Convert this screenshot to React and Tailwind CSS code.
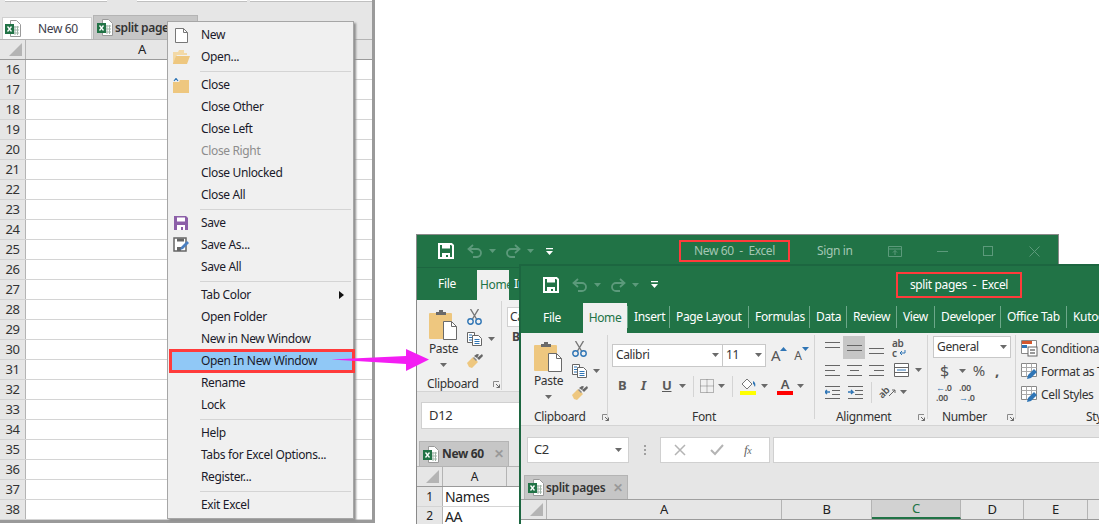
import React from 'react';

const rowNums = Array.from({ length: 23 }, (_, i) => 16 + i);

const menu = [
  { label: 'New', icon: 'new' },
  { label: 'Open...', icon: 'open' },
  { sep: true },
  { label: 'Close', icon: 'close' },
  { label: 'Close Other' },
  { label: 'Close Left' },
  { label: 'Close Right', disabled: true },
  { label: 'Close Unlocked' },
  { label: 'Close All' },
  { sep: true },
  { label: 'Save', icon: 'save' },
  { label: 'Save As...', icon: 'saveas' },
  { label: 'Save All' },
  { sep: true },
  { label: 'Tab Color', sub: true },
  { label: 'Open Folder' },
  { label: 'New in New Window' },
  { label: 'Open In New Window', active: true },
  { label: 'Rename' },
  { label: 'Lock' },
  { sep: true },
  { label: 'Help' },
  { label: 'Tabs for Excel Options...' },
  { label: 'Register...' },
  { sep: true },
  { label: 'Exit Excel' },
];

const ribbonTabs = [
  { label: 'Insert', w: 'w-[42px]' },
  { label: 'Page Layout', w: 'w-[79px]' },
  { label: 'Formulas', w: 'w-[61px]' },
  { label: 'Data', w: 'w-[37px]' },
  { label: 'Review', w: 'w-[50px]' },
  { label: 'View', w: 'w-[38px]' },
  { label: 'Developer', w: 'w-[66px]' },
  { label: 'Office Tab', w: 'w-[66px]' },
  { label: 'Kutools', w: 'w-[60px]' },
];

function XlsIcon() {
  return (
    <svg width="16" height="17" viewBox="0 0 16 17" className="shrink-0">
      <path d="M5.5 .5h6l4 4v12h-10z" fill="#fff" stroke="#9a9a9a" />
      <path d="M8 7h6M8 10h6M8 13h6M10 6v9M12.5 6v9" stroke="#9fb5a8" fill="none" />
      <rect x="0" y="4" width="9" height="10" fill="#217346" />
      <path d="M2.5 6.5l4 5M6.5 6.5l-4 5" stroke="#fff" strokeWidth="1.3" />
    </svg>
  );
}

function Caret({ color = '#6a6a6a' }) {
  return (
    <svg width="7" height="4" viewBox="0 0 7 4" className="shrink-0">
      <path d="M0 0h7L3.5 4z" fill={color} />
    </svg>
  );
}

function Launcher() {
  return (
    <svg width="7" height="7" viewBox="0 0 7 7" className="shrink-0">
      <path d="M.5 6V.5H6" stroke="#8a8a8a" fill="none" />
      <path d="M3 3l3.5 3.5M6.5 3.5v3h-3" stroke="#6a6a6a" fill="none" />
    </svg>
  );
}

function Corner() {
  return (
    <svg width="13" height="13" viewBox="0 0 13 13">
      <path d="M13 0v13H0z" fill="#b4b4b4" />
    </svg>
  );
}

function SaveIcon({ color = '#fff', size = 16 }) {
  return (
    <svg width={size} height={size} viewBox="0 0 16 16">
      <path d="M1 1h12.5L15 2.5V15H1z" fill="none" stroke={color} strokeWidth="2" />
      <path d="M4 1.5h8v4H4zM4 10h8v5h-2v-3H8v3H4z" fill={color} />
    </svg>
  );
}

function Undo({ flip }) {
  return (
    <svg width="16" height="14" viewBox="0 0 16 14" className={flip ? '-scale-x-100' : ''}>
      <path d="M6 1L1.5 5 6 9M2 5h8a4 4 0 0 1 0 8H6" fill="none" stroke="#5c9a7b" strokeWidth="1.8" />
    </svg>
  );
}

function QatDown() {
  return (
    <svg width="7" height="7" viewBox="0 0 7 7">
      <path d="M0 0h7v1.2H0zM0 3h7L3.5 7z" fill="#fff" />
    </svg>
  );
}

function PasteIcon() {
  return (
    <svg width="29" height="31" viewBox="0 0 29 31" className="shrink-0">
      <rect x="0" y="4" width="23" height="26" rx="1" fill="#eec77f" />
      <path d="M7 6V3h3V1h4v2h3v3z" fill="#6a6a6a" />
      <path d="M14.5 12.5h8l5 5v13h-13z" fill="#fff" stroke="#6a6a6a" />
      <path d="M22.5 12.5v5h5" fill="none" stroke="#6a6a6a" />
    </svg>
  );
}

function CutIcon() {
  return (
    <svg width="15" height="16" viewBox="0 0 15 16" className="shrink-0">
      <path d="M3.5 0l6 10M11.5 0l-6 10" stroke="#777" strokeWidth="1.4" fill="none" />
      <circle cx="3.5" cy="12.5" r="2.7" fill="none" stroke="#2f75b5" strokeWidth="1.4" />
      <circle cx="11.5" cy="12.5" r="2.7" fill="none" stroke="#2f75b5" strokeWidth="1.4" />
    </svg>
  );
}

function CopyIcon() {
  return (
    <svg width="15" height="14" viewBox="0 0 15 14" className="shrink-0">
      <path d="M.5.5h7v10h-7z" fill="#fff" stroke="#666" />
      <path d="M5.5 3.5h6l3 3v7h-9z" fill="#fff" stroke="#666" />
      <path d="M2 3h3M2 5.5h3M2 8h3M7.5 7.5h5M7.5 9.5h5M7.5 11.5h5" stroke="#2f75b5" />
    </svg>
  );
}

function BrushIcon() {
  return (
    <svg width="16" height="15" viewBox="0 0 16 15" className="shrink-0">
      <path d="M0 10l6-6 5 5-6 6-3-1z" fill="#eec77f" />
      <path d="M7 3l3-2 2 .5L10 5z M10 5l5-4 1 2-4 4z" fill="#666" />
      <path d="M9 8l-3-3 1-1 3 3z" fill="#8a8a8a" />
    </svg>
  );
}

function Lines({ rows, hl }) {
  // horizontal strokes for the alignment buttons
  return (
    <svg width="15" height="14" viewBox="0 0 15 14" className="shrink-0">
      {rows.map((r, i) => (
        <path key={i} d={`M${r[0]} ${r[1]}.5H${r[2]}`} stroke="#666" />
      ))}
      {hl}
    </svg>
  );
}

function FileMenuIcon({ name }) {
  if (name === 'new') {
    return (
      <svg width="13" height="15" viewBox="0 0 13 15">
        <path d="M.5.5h8l4 4v10H.5z" fill="#fff" stroke="#777" />
        <path d="M8.5.5v4h4" fill="none" stroke="#777" />
      </svg>
    );
  }
  if (name === 'open') {
    return (
      <svg width="17" height="14" viewBox="0 0 17 14">
        <path d="M0 2h5l1-2h5v3h3v2H4L0 13z" fill="#f3d9a6" />
        <path d="M0 13l3-7h14l-3 8H0z" fill="#eec77f" />
      </svg>
    );
  }
  if (name === 'close') {
    return (
      <svg width="16" height="15" viewBox="0 0 16 15">
        <path d="M0 4h6l1-2h9v13H0z" fill="#eec77f" />
        <path d="M1 3l2-2.500 2 2.500" fill="none" stroke="#2f75b5" strokeWidth="1.200" />
      </svg>
    );
  }
  if (name === 'save') {
    return (
      <svg width="14" height="14" viewBox="0 0 14 14">
        <path d="M0 0h12l2 2v12H0z" fill="#8c5fa8" />
        <path d="M3 1.500h8v4H3zM3 9h8v5H9v-3H7v3H3z" fill="#fff" />
      </svg>
    );
  }
  return (
    <svg width="16" height="16" viewBox="0 0 16 16">
      <path d="M1 1h12v13H1z" fill="#fff" stroke="#666" strokeWidth="1.500" />
      <path d="M4 1.500h7v3H4zM4 10h4v4H4z" fill="#666" />
      <path d="M7 13l1-3 6-6 2 2-6 6z" fill="#4a7fc1" />
    </svg>
  );
}

function ContextMenu() {
  return (
    <div className="absolute left-[167px] top-[21px] w-[187px] h-[498px] bg-[#f0f0f0] border border-[#a6a6a6] shadow-[2px_2px_2px_#8f8f8f] pt-[2px] text-[12px] text-[#1a1a2a]">
      {menu.map((m, i) => {
        if (m.sep) {
          return (
            <div key={i} className="h-[6px] flex items-center pl-[32px] pr-[2px]">
              <div className="h-px w-full bg-[#d4d4d4]" />
            </div>
          );
        }
        return (
          <div
            key={i}
            className={`h-[22px] flex items-center ${
              m.active ? 'bg-[#90c8f6] outline-[3px] outline-[#ff3b3b] -outline-offset-2 ml-[2px] mr-[-1px]' : ''
            }`}
          >
            <div className={`${m.active ? 'w-[31px]' : 'w-[33px] pr-[7px]'} flex justify-center shrink-0`}>
              {m.icon && <FileMenuIcon name={m.icon} />}
            </div>
            <span className={m.disabled ? 'text-[#8d8d8d]' : ''}>{m.label}</span>
            {m.sub && (
              <svg width="5" height="8" viewBox="0 0 5 8" className="ml-auto mr-[9px]">
                <path d="M0 0l5 4-5 4z" fill="#111" />
              </svg>
            )}
          </div>
        );
      })}
    </div>
  );
}

function LeftWindow() {
  return (
    <div className="absolute left-0 top-0 w-[375px] h-[523px] border-r-[3px] border-b-[3px] border-[#9a9a9a] bg-[#e6e6e6] flex flex-col text-[12px] text-[#333]">
      <div className="h-[15px] flex items-start shrink-0">
        <div className="ml-[5px] w-[102px] h-[2px] bg-white border-b border-[#c0c0c0]" />
        <div className="ml-[30px] w-[110px] h-[2px] bg-white border-b border-[#c0c0c0]" />
        <div className="ml-[3px] w-[122px] h-[2px] bg-white border-b border-[#c0c0c0]" />
      </div>
      <div className="h-[25px] flex items-end pl-[2px] shrink-0 border-b border-[#b4b4b4]">
        <div className="w-[90px] h-[22px] bg-white flex items-center pl-[2px] border border-b-0 border-[#d0d0d0]">
          <XlsIcon />
          <span className="ml-[17px] text-[#3c3c4a]">New 60</span>
        </div>
        <div className="ml-px w-[105px] h-[24px] bg-[#c6c6c6] flex items-center pl-[3px] font-semibold border border-b-0 border-[#b4b4b4]">
          <XlsIcon />
          <span className="ml-[2px] whitespace-nowrap text-[#333]">split pages</span>
        </div>
      </div>
      <div className="h-[20px] flex shrink-0 border-b border-[#9a9a9a]">
        <div className="w-[26px] flex items-end justify-end pr-[3px] pb-[3px] border-r border-[#b4b4b4]">
          <Corner />
        </div>
        <div className="w-[232px] flex items-center justify-center text-[13px] text-[#222]">A</div>
      </div>
      {rowNums.map((n) => (
        <div key={n} className="h-[20px] flex shrink-0 border-b border-[#d4d4d4]">
          <div className="w-[26px] bg-[#e6e6e6] flex items-center justify-center text-[13px] border-r border-[#b4b4b4]">
            {n}
          </div>
          <div className="flex-1 bg-white" />
        </div>
      ))}
    </div>
  );
}

function BackWindow() {
  return (
    <div className="absolute left-[416px] top-[234px] w-[643px] h-[290px] border-t border-l border-r border-[#8a8a8a] bg-[#e6e6e6] flex flex-col text-[12px]">
      <div className="h-[33px] bg-[#217346] shrink-0 flex items-center text-[#a3c6b3] border-b border-[#1c6640]">
        <div className="ml-[21px]"><SaveIcon /></div>
        <div className="ml-[13px]"><Undo /></div>
        <div className="ml-[6px]"><Caret color="#5c9a7b" /></div>
        <div className="ml-[9px]"><Undo flip /></div>
        <div className="ml-[6px]"><Caret color="#5c9a7b" /></div>
        <div className="ml-[12px]"><QatDown /></div>
        <div className="ml-[126px] w-[111px] h-[22px] border-2 border-[#ff3b3b] flex items-center justify-center whitespace-pre">
          New 60  -  Excel
        </div>
        <span className="ml-[27px] w-[36px] whitespace-nowrap">Sign in</span>
        <svg width="14" height="11" viewBox="0 0 14 11" className="ml-[35px]">
          <path d="M.5.5h13v10H.5zM.5 3h13M7 9V4.500M5 6.500l2-2 2 2" fill="none" stroke="#5c9a7b" />
        </svg>
        <div className="ml-[35px] w-[11px] h-px bg-[#5c9a7b]" />
        <div className="ml-[35px] w-[10px] h-[10px] border border-[#5c9a7b]" />
        <svg width="11" height="11" viewBox="0 0 11 11" className="ml-[36px]">
          <path d="M.5.5l10 10M10.500.5l-10 10" stroke="#5c9a7b" fill="none" />
        </svg>
      </div>
      <div className="h-[32px] bg-[#217346] shrink-0 flex text-white">
        <div className="w-[60px] flex items-center justify-center">File</div>
        <div className="w-[32px] h-[30px] mt-[2px] bg-[#f0f0f0] text-[#217346] flex items-center pl-[3px] overflow-hidden">
          Home
        </div>
        <div className="flex items-center ml-[5px]">Insert</div>
      </div>
      <div className="h-[92px] bg-[#f0f0f0] shrink-0 border-b border-[#d4d4d4] flex text-[#444]">
        <div className="w-[85px] flex flex-col pl-[12px] pt-[8px] border-r border-[#d4d4d4] my-[1px]">
          <div className="flex h-[67px] shrink-0">
            <div className="flex flex-col items-center w-[29px]">
              <PasteIcon />
              <span className="mt-[1px] text-[#333] leading-[16px]">Paste</span>
              <div className="mt-[6px]"><Caret /></div>
            </div>
            <div className="ml-[9px] flex flex-col gap-[7px]">
              <CutIcon />
              <div className="flex items-center gap-[6px]"><CopyIcon /><Caret /></div>
              <BrushIcon />
            </div>
          </div>
          <div className="flex items-center text-[#333] leading-[16px] shrink-0">
            <span className="ml-[-2px]">Clipboard</span>
            <div className="ml-[15px]"><Launcher /></div>
          </div>
        </div>
        <div className="ml-[5px] pt-[7px]">
          <div className="w-[20px] h-[20px] bg-white border border-[#d0d0d0] pl-[2px] text-[#333] overflow-hidden">Ca</div>
          <div className="mt-[1px] pl-[5px] font-bold">B</div>
        </div>
      </div>
      <div className="h-[48px] shrink-0 pt-[10px] pl-[4px]">
        <div className="w-[100px] h-[27px] bg-white border border-[#d0d0d0] flex items-center pl-[7px] text-[#333] text-[13px]">D12</div>
      </div>
      <div className="h-[27px] shrink-0 flex items-end pl-[2px] border-b border-[#b4b4b4]">
        <div className="w-[90px] h-[25px] bg-[#c6c6c6] flex items-center pl-[3px] font-bold text-[#333] border border-b-0 border-[#b4b4b4]">
          <XlsIcon />
          <span className="ml-[3px]">New 60</span>
          <span className="ml-auto mr-[4px] text-[#999] font-bold">✕</span>
        </div>
      </div>
      <div className="h-[20px] shrink-0 flex border-b border-[#9a9a9a] text-[#222]">
        <div className="w-[26px] flex items-end justify-end pr-[3px] pb-[3px] border-r border-[#b4b4b4]"><Corner /></div>
        <div className="w-[64px] flex items-center justify-center border-r border-[#b4b4b4]">A</div>
      </div>
      <div className="h-[20px] shrink-0 flex border-b border-[#d4d4d4] text-[#222]">
        <div className="w-[26px] flex items-center justify-center border-r border-[#b4b4b4]">1</div>
        <div className="flex-1 bg-white pl-[2px] text-[14px] leading-[19px]">Names</div>
      </div>
      <div className="flex-1 flex text-[#222]">
        <div className="w-[26px] flex justify-center border-r border-[#b4b4b4]">2</div>
        <div className="flex-1 bg-white pl-[2px] text-[14px] leading-[20px]">AA</div>
      </div>
    </div>
  );
}

function ClipboardGroup() {
  return (
    <div className="w-[86px] shrink-0 flex flex-col pl-[13px] pt-[8px]">
      <div className="flex h-[68px] shrink-0">
        <div className="flex flex-col items-center w-[29px]">
          <PasteIcon />
          <span className="mt-[1px] text-[#333] leading-[16px]">Paste</span>
          <div className="mt-[6px]"><Caret /></div>
        </div>
        <div className="ml-[9px] flex flex-col gap-[7px]">
          <CutIcon />
          <div className="flex items-center gap-[6px]"><CopyIcon /><Caret /></div>
          <BrushIcon />
        </div>
      </div>
      <div className="flex items-center text-[#333] leading-[16px] shrink-0">
        <span>Clipboard</span>
        <div className="ml-[17px]"><Launcher /></div>
      </div>
    </div>
  );
}

function Divider() {
  return <div className="w-px h-[84px] bg-[#d4d4d4] mt-[2px] shrink-0" />;
}

function FontGroup() {
  return (
    <div className="w-[206px] shrink-0 flex flex-col pl-[4px] pt-[10px] text-[#333]">
      <div className="flex items-center h-[24px] shrink-0">
        <div className="w-[111px] h-[23px] bg-white border border-[#c8c8c8] flex items-center justify-between px-[3px]">
          Calibri<Caret />
        </div>
        <div className="w-[43px] h-[23px] bg-white border border-[#c8c8c8] border-l-0 flex items-center justify-between pl-[3px] pr-[3px]">
          11<Caret />
        </div>
        <span className="ml-[5px] text-[15px] text-[#555]">A</span>
        <svg width="7" height="4" viewBox="0 0 7 4" className="mb-[12px]"><path d="M0 4h7L3.500 0z" fill="#2f75b5" /></svg>
        <span className="ml-[7px] text-[12px] text-[#555] mt-[2px]">A</span>
        <svg width="7" height="4" viewBox="0 0 7 4" className="mb-[12px]"><path d="M0 0h7L3.500 4z" fill="#2f75b5" /></svg>
      </div>
      <div className="flex items-center h-[24px] mt-[7px] shrink-0 text-[#5a5a5a]">
        <span className="ml-[6px] w-[22px] font-bold text-[13px]">B</span>
        <span className="w-[22px] italic font-bold text-[13px] pl-[1px]">I</span>
        <span className="w-[14px] underline font-bold text-[13px]">U</span>
        <div className="ml-[3px]"><Caret /></div>
        <div className="ml-[7px] w-px h-[21px] bg-[#d4d4d4]" />
        <svg width="14" height="14" viewBox="0 0 14 14" className="ml-[6px]">
          <path d="M.5.500h13v13H.5z" fill="none" stroke="#777" strokeDasharray="1 1" />
          <path d="M7 .5v13M.5 7h13" stroke="#777" strokeDasharray="1 1" />
        </svg>
        <div className="ml-[4px]"><Caret /></div>
        <div className="ml-[7px] w-px h-[21px] bg-[#d4d4d4]" />
        <svg width="17" height="17" viewBox="0 0 17 17" className="ml-[7px]">
          <path d="M7 1l5 5-5 5-5-5z" fill="#fff" stroke="#777" />
          <path d="M13 3c2 1 3 3 2 6-1-1-1-3-2-3z" fill="#2f75b5" />
          <rect y="13" width="16" height="4" fill="#ffff00" />
        </svg>
        <div className="ml-[4px]"><Caret /></div>
        <div className="ml-[9px] w-[16px] flex flex-col items-center">
          <span className="text-[13px] leading-[13px] font-semibold text-[#555]">A</span>
          <div className="w-[16px] h-[4px] bg-[#ff0000]" />
        </div>
        <div className="ml-[4px]"><Caret /></div>
      </div>
      <div className="mt-[11px] text-center pr-[18px] leading-[16px] shrink-0">Font</div>
    </div>
  );
}

function AlignmentGroup() {
  const top = [[0, 1, 15], [0, 6, 15]];
  const mid = [[0, 4, 15], [0, 9, 15]];
  const bot = [[0, 7, 15], [0, 12, 15]];
  const left = [[0, 2, 15], [0, 7, 10], [0, 12, 15]];
  const center = [[0, 2, 15], [3, 7, 12], [0, 12, 15]];
  const right = [[0, 2, 15], [5, 7, 15], [0, 12, 15]];
  const indent = [[0, 1, 15], [7, 5, 15], [7, 9, 15], [0, 13, 15]];
  return (
    <div className="w-[112px] shrink-0 flex flex-col pl-[6px] pt-[3px] text-[#333]">
      <div className="flex items-center h-[23px] shrink-0">
        <div className="w-[22px] flex justify-center"><Lines rows={top} /></div>
        <div className="w-[22px] h-[23px] bg-[#c6c6c6] flex items-center justify-center"><Lines rows={mid} /></div>
        <div className="w-[22px] flex justify-center"><Lines rows={bot} /></div>
        <div className="ml-[5px] w-[20px] text-[10px] leading-[10px] text-[#555] font-semibold">
          <div>ab</div>
          <div className="flex items-center">
            c
            <svg width="7" height="6" viewBox="0 0 7 6" className="ml-[2px]">
              <path d="M6 0v3H1M3 1L1 3l2 2" stroke="#2f75b5" fill="none" />
            </svg>
          </div>
        </div>
      </div>
      <div className="flex items-center h-[22px] shrink-0">
        <div className="w-[22px] flex justify-center"><Lines rows={left} /></div>
        <div className="w-[22px] flex justify-center"><Lines rows={center} /></div>
        <div className="w-[22px] flex justify-center"><Lines rows={right} /></div>
        <svg width="15" height="14" viewBox="0 0 15 14" className="ml-[7px]">
          <path d="M.5.500h14v13H.5zM.5 4.500h14M.5 9.500h14" fill="#fff" stroke="#666" />
          <path d="M3 7h9" stroke="#2f75b5" />
        </svg>
        <div className="ml-[6px]"><Caret /></div>
      </div>
      <div className="flex items-center h-[22px] shrink-0">
        <div className="w-[23px] flex justify-center">
          <Lines rows={indent} hl={<path d="M5 7H0l2-2M0 7l2 2" stroke="#2f75b5" strokeWidth="1.400" fill="none" />} />
        </div>
        <div className="w-[23px] flex justify-center">
          <Lines rows={indent} hl={<path d="M0 7h5l-2-2M5 7l-2 2" stroke="#2f75b5" strokeWidth="1.400" fill="none" />} />
        </div>
        <div className="ml-[4px] w-px h-[21px] bg-[#d4d4d4]" />
        <span className="ml-[6px] text-[10px] font-semibold text-[#555] -rotate-45 inline-block">ab</span>
        <svg width="7" height="7" viewBox="0 0 7 7"><path d="M0 7l6-6M3 1h3v3" stroke="#666" fill="none" /></svg>
        <div className="ml-[4px]"><Caret /></div>
      </div>
      <div className="mt-[6px] flex items-center pl-[15px] leading-[16px] shrink-0">
        <span>Alignment</span>
        <div className="ml-[27px]"><Launcher /></div>
      </div>
    </div>
  );
}

function NumberGroup() {
  return (
    <div className="w-[87px] shrink-0 flex flex-col pl-[5px] pt-[3px] text-[#333]">
      <div className="w-[78px] h-[22px] shrink-0 bg-white border border-[#c8c8c8] flex items-center justify-between px-[3px]">
        General<Caret />
      </div>
      <div className="flex items-center h-[23px] shrink-0 text-[#555] mt-[1px]">
        <span className="ml-[7px] text-[16px] leading-none">$</span>
        <div className="ml-[10px]"><Caret /></div>
        <span className="ml-[7px] text-[15px] leading-none">%</span>
        <span className="ml-[10px] text-[15px] leading-none font-bold">,</span>
      </div>
      <div className="flex items-center h-[22px] shrink-0 text-[9px] leading-[10px] text-[#555] font-semibold">
        <div className="ml-[3px] w-[23px]"><span className="text-[#2f75b5]">←</span>.0<br />.00</div>
        <div>.00<br /><span className="text-[#2f75b5]">→</span>.0</div>
      </div>
      <div className="mt-[5px] flex items-center pl-[9px] leading-[16px] shrink-0">
        <span>Number</span>
        <div className="ml-[20px]"><Launcher /></div>
      </div>
    </div>
  );
}

function StylesGroup() {
  const rows = ['Conditional Formatting', 'Format as Table', 'Cell Styles'];
  return (
    <div className="flex-1 flex flex-col pl-[5px] pt-[4px] text-[#333] whitespace-nowrap overflow-hidden">
      {rows.map((r, i) => (
        <div key={r} className="flex items-center h-[23px] shrink-0">
          <svg width="17" height="17" viewBox="0 0 17 17" className="mr-[3px] shrink-0">
            <path d="M.5.500h15v13H.5z" fill="#fff" stroke="#888" />
            {i === 0 ? (
              <>
                <rect x="1" y="1" width="10" height="3" fill="#d4572d" />
                <rect x="1" y="5" width="5" height="3" fill="#2f75b5" />
                <rect x="7" y="7" width="9" height="9" fill="#fff" stroke="#666" />
                <path d="M9 10h5M9 13h5" stroke="#333" />
              </>
            ) : (
              <>
                <path d="M.5 4.500h15M.5 8.500h15M5.500.5v13M10.500.5v13" stroke="#aaa" fill="none" />
                <path d="M6 16l1-4 6-6 3 3-6 6z" fill="#2f75b5" />
              </>
            )}
          </svg>
          {r}
        </div>
      ))}
      <div className="mt-[3px] pl-[65px] leading-[16px] shrink-0">Styles</div>
    </div>
  );
}

function FrontWindow() {
  return (
    <div className="absolute left-[519px] top-[264px] w-[580px] h-[260px] border-l-2 border-t-2 border-[#1c6640] bg-[#e6e6e6] flex flex-col text-[12px] overflow-hidden">
      <div className="h-[37px] bg-[#217346] shrink-0 flex items-center text-white">
        <div className="ml-[22px]"><SaveIcon /></div>
        <div className="ml-[13px]"><Undo /></div>
        <div className="ml-[6px]"><Caret color="#5c9a7b" /></div>
        <div className="ml-[9px]"><Undo flip /></div>
        <div className="ml-[6px]"><Caret color="#5c9a7b" /></div>
        <div className="ml-[12px]"><QatDown /></div>
        <div className="ml-[238px] w-[126px] h-[26px] border-2 border-[#ff3b3b] flex items-center justify-center whitespace-pre">
          split pages  -  Excel
        </div>
      </div>
      <div className="h-[30px] bg-[#217346] shrink-0 flex text-white">
        <div className="w-[62px] shrink-0 flex items-center justify-center">File</div>
        <div className="w-[44px] shrink-0 bg-[#f0f0f0] text-[#217346] flex items-center justify-center">Home</div>
        {ribbonTabs.map((t) => (
          <div key={t.label} className={`${t.w} shrink-0 flex items-center pl-[6px] mt-[3px] mb-[5px] border-l border-[#6da88a] whitespace-nowrap`}>
            {t.label}
          </div>
        ))}
      </div>
      <div className="h-[93px] bg-[#f0f0f0] shrink-0 flex border-b border-[#d4d4d4] overflow-hidden">
        <ClipboardGroup />
        <Divider />
        <FontGroup />
        <Divider />
        <AlignmentGroup />
        <Divider />
        <NumberGroup />
        <Divider />
        <StylesGroup />
      </div>
      <div className="h-[49px] shrink-0 flex pt-[11px] text-[#333]">
        <div className="ml-[6px] w-[102px] h-[26px] bg-white border border-[#d0d0d0] flex items-center justify-between pl-[6px] pr-[6px] text-[13px]">
          C2<Caret />
        </div>
        <div className="w-[31px] h-[26px] flex flex-col items-center justify-center gap-[2px]">
          <div className="w-[2px] h-[2px] bg-[#a0a0a0]" />
          <div className="w-[2px] h-[2px] bg-[#a0a0a0]" />
          <div className="w-[2px] h-[2px] bg-[#a0a0a0]" />
        </div>
        <div className="w-[110px] h-[26px] bg-white border border-[#d0d0d0] flex items-center">
          <svg width="12" height="12" viewBox="0 0 12 12" className="ml-[13px]">
            <path d="M1 1l10 10M11 1L1 11" stroke="#b4b4b4" strokeWidth="1.500" />
          </svg>
          <svg width="14" height="12" viewBox="0 0 14 12" className="ml-[24px]">
            <path d="M1 6l4 4 8-9" stroke="#b4b4b4" strokeWidth="2" fill="none" />
          </svg>
          <span className="ml-[20px] italic font-['Liberation_Serif',serif] text-[13px] text-[#666]">f<span className="text-[10px]">x</span></span>
        </div>
        <div className="ml-[3px] flex-1 h-[26px] bg-white border border-[#d0d0d0] border-r-0" />
      </div>
      <div className="h-[25px] shrink-0 flex items-end pl-[3px] border-b border-[#a0a0a0]">
        <div className="w-[104px] h-[24px] bg-[#c6c6c6] flex items-center pl-[3px] font-semibold text-[#333] border border-b-0 border-[#b4b4b4]">
          <XlsIcon />
          <span className="ml-[2px] whitespace-nowrap">split pages</span>
          <span className="ml-auto mr-[4px] text-[#999] font-bold">✕</span>
        </div>
      </div>
      <div className="h-[20px] shrink-0 flex border-b border-[#9a9a9a] text-[#222] text-[13px]">
        <div className="w-[26px] flex items-end justify-end pr-[3px] pb-[3px] border-r border-[#b4b4b4]"><Corner /></div>
        <div className="w-[235px] flex items-center justify-center border-r border-[#b4b4b4]">A</div>
        <div className="w-[90px] flex items-center justify-center border-r border-[#b4b4b4]">B</div>
        <div className="w-[89px] flex items-center justify-center bg-[#d2d2d2] text-[#217346] border-b-2 border-[#217346] border-r border-r-[#b4b4b4]">C</div>
        <div className="w-[63px] flex items-center justify-center border-r border-[#b4b4b4]">D</div>
        <div className="w-[64px] flex items-center justify-center border-r border-[#b4b4b4]">E</div>
      </div>
      <div className="flex-1 bg-white" />
    </div>
  );
}

function PinkArrow() {
  return (
    <svg width="100" height="24" viewBox="0 0 100 24" className="absolute left-[331px] top-[348px]">
      <path d="M0 11.500L75 8V1l23 10.500L75 23v-7z" fill="#f31ef3" />
    </svg>
  );
}

export default function App() {
  return (
    <div className="relative w-[1101px] h-[524px] bg-white overflow-hidden tracking-[-0.35px] font-['Noto_Sans','Open_Sans',sans-serif]">
      <LeftWindow />
      <ContextMenu />
      <BackWindow />
      <FrontWindow />
      <PinkArrow />
    </div>
  );
}
